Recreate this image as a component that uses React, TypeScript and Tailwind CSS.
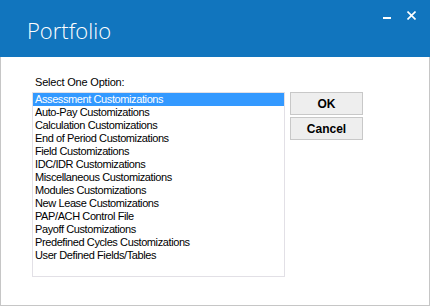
import React from 'react';

const options = [
  'Assessment Customizations',
  'Auto-Pay Customizations',
  'Calculation Customizations',
  'End of Period Customizations',
  'Field Customizations',
  'IDC/IDR Customizations',
  'Miscellaneous Customizations',
  'Modules Customizations',
  'New Lease Customizations',
  'PAP/ACH Control File',
  'Payoff Customizations',
  'Predefined Cycles Customizations',
  'User Defined Fields/Tables',
];

function DialogButton({ label }: { label: string }) {
  return (
    <button className="w-[73px] h-[23px] bg-[#eeeeee] border border-[#c8c8c8] text-[12px] font-bold text-black leading-none flex items-center justify-center">
      {label}
    </button>
  );
}

export default function App() {
  const selected = 0;
  return (
    <div className="w-[430px] h-[307px] bg-white flex flex-col font-['Liberation_Sans',Arial,sans-serif]">
      {/* Title bar */}
      <div className="h-[57px] bg-[#1175be] flex items-start justify-between shrink-0">
        <div className="pl-[27px] pt-[19px] text-[22px] font-light text-white leading-none font-['Open_Sans',sans-serif]">
          Portfolio
        </div>
        <div className="flex items-start pr-[14px] pt-[11px] gap-[16px]">
          <div className="mt-[6px] w-[8px] h-[2px] bg-white" />
          <svg width="9" height="9" viewBox="0 0 9 9" className="block">
            <path d="M0.5 0.5 L8.5 8.5 M8.5 0.5 L0.5 8.5" stroke="white" strokeWidth="1.6" />
          </svg>
        </div>
      </div>

      {/* Body */}
      <div className="flex-1 border-x border-b border-[#c6c6c6] mb-[1px] flex pl-[31px] pt-[19px]">
        <div className="flex flex-col">
          <div className="text-[11px] leading-[13px] tracking-[-0.2px] text-black pl-[3px] mb-[3px]">Select One Option:</div>
          <div className="w-[253px] h-[185px] border border-[#e2e0e6] flex flex-col">
            {options.map((o, i) => (
              <div
                key={o}
                className={
                  'h-[13px] leading-[13px] text-[11px] tracking-[-0.4px] pl-[2px] whitespace-nowrap ' +
                  (i === selected ? 'bg-[#3399ff] text-white' : 'text-black')
                }
              >
                {o}
              </div>
            ))}
          </div>
        </div>
        <div className="flex flex-col gap-[2px] ml-[5px] pt-[16px]">
          <DialogButton label="OK" />
          <DialogButton label="Cancel" />
        </div>
      </div>
    </div>
  );
}
